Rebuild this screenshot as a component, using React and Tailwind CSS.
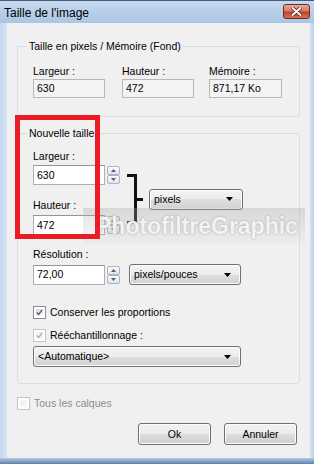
import React from "react";

// petits boutons haut/bas à côté des champs
const Spin = () => (
  <div className="flex flex-col w-[13px]">
    <div className="h-[9px] border border-[#aab3c1] rounded-[2px] bg-gradient-to-b from-[#fbfbfb] to-[#e1e3e7] flex items-center justify-center">
      <svg width="5" height="3" viewBox="0 0 5 3">
        <path d="M0 3L2.5 0L5 3Z" fill="#4d5f82" />
      </svg>
    </div>
    <div className="h-[9px] border border-[#aab3c1] rounded-[2px] bg-gradient-to-b from-[#fbfbfb] to-[#e1e3e7] flex items-center justify-center">
      <svg width="5" height="3" viewBox="0 0 5 3">
        <path d="M0 0L5 0L2.5 3Z" fill="#4d5f82" />
      </svg>
    </div>
  </div>
);

const Combo = ({ label, className }) => (
  <div
    className={`h-[21px] rounded-[3px] border border-[#707070] bg-[linear-gradient(#f3f3f3_0%,#ececec_50%,#dedede_50%,#d2d2d2_100%)] shadow-[inset_0_0_0_1px_#fbfbfb] flex items-center pl-[4px] pr-[9px] ${className}`}
  >
    <span className="flex-1 leading-[13px]">{label}</span>
    <svg width="7" height="4" viewBox="0 0 7 4">
      <path d="M0 0H7L3.5 4Z" fill="#000" />
    </svg>
  </div>
);

const Check = ({ disabled }) => (
  <div
    className={`w-[13px] h-[13px] border bg-white p-[2px] ${
      disabled ? "border-[#c4c4c4]" : "border-[#8e8f8f]"
    }`}
  >
    <div
      className={`w-full h-full flex items-center justify-center ${
        disabled ? "bg-[#f4f4f4]" : "bg-gradient-to-br from-[#d8d8d8] to-[#fafafa]"
      }`}
    >
      {disabled === undefined || disabled === "checked" ? (
        <svg width="9" height="9" viewBox="0 0 9 9">
          <path
            d="M1 4.5L3.4 7L8 1.2"
            fill="none"
            stroke={disabled ? "#b0b0b0" : "#4a5d8c"}
            strokeWidth="1.8"
          />
        </svg>
      ) : null}
    </div>
  </div>
);

const Field = ({ value }) => (
  <div className="w-[72px] h-[20px] bg-white border border-[#a9b0ba] border-t-[#8e96a2] flex items-center pl-[3px] leading-[13px]">
    {value}
  </div>
);

const Button = ({ children }) => (
  <button className="w-[73px] h-[22px] rounded-[3px] border border-[#707070] bg-[linear-gradient(#f2f2f2_0%,#ebebeb_50%,#dddddd_50%,#cfcfcf_100%)] shadow-[inset_0_0_0_1px_#fcfcfc] text-[10.5px] leading-[13px]">
    {children}
  </button>
);

export default function App() {
  return (
    <div className="w-[314px] h-[464px] flex flex-col font-['Liberation_Sans',Arial,sans-serif] text-[10.5px] text-black bg-[#bcd2ec]">
      {/* barre de titre */}
      <div className="h-[23px] flex items-start border-t border-[#4b5d74] bg-gradient-to-b from-[#c5d9ef] to-[#abc5e3] pl-[4px] pr-[4px]">
        <span className="flex-1 text-[12px] leading-[14px] mt-[5px] text-black">Taille de l'image</span>
        <div className="mt-[3px] w-[27px] h-[15px] rounded-[3px] border border-[#6d2a22] bg-[linear-gradient(#e9a99b_0%,#d77a68_45%,#c1412d_55%,#d4714f_100%)] flex items-center justify-center">
          <svg width="11" height="9" viewBox="0 0 11 9">
            <path d="M1.5 1L9.5 8M9.5 1L1.5 8" stroke="#5b1f17" strokeWidth="3.6" strokeLinecap="round" />
            <path d="M1.5 1L9.5 8M9.5 1L1.5 8" stroke="#ffffff" strokeWidth="2" strokeLinecap="round" />
          </svg>
        </div>
      </div>

      <div className="flex-1 flex">
        <div className="w-[7px] bg-gradient-to-r from-[#c3d7ee] to-[#d6e4f3]" />

        {/* contenu */}
        <div className="flex-1 relative bg-[#f0f0f0] flex flex-col pt-[17px]">
          <fieldset className="mx-[10px] h-[77px] border border-[#d5dfe5] rounded-[3px]">
            <legend className="ml-[9px] px-[2px] leading-[13px]">Taille en pixels / Mémoire (Fond)</legend>
            <div className="flex pl-[15px] pt-[12px]">
              <div className="flex flex-col w-[72px]">
                <span className="leading-[13px]">Largeur :</span>
                <div className="mt-[1px] h-[19px] bg-[#f3f3f3] border border-[#b7b7b7] flex items-center pl-[3px] leading-[13px]">630</div>
              </div>
              <div className="flex flex-col w-[72px] ml-[17px]">
                <span className="leading-[13px]">Hauteur :</span>
                <div className="mt-[1px] h-[19px] bg-[#f3f3f3] border border-[#b7b7b7] flex items-center pl-[3px] leading-[13px]">472</div>
              </div>
              <div className="flex flex-col w-[73px] ml-[15px]">
                <span className="leading-[13px]">Mémoire :</span>
                <div className="mt-[1px] h-[19px] bg-[#f3f3f3] border border-[#b7b7b7] flex items-center pl-[3px] leading-[13px]">871,17 Ko</div>
              </div>
            </div>
          </fieldset>

          <fieldset className="mt-[10px] mx-[10px] h-[257px] border border-[#d5dfe5] rounded-[3px]">
            <legend className="ml-[9px] px-[2px] leading-[13px]">Nouvelle taille</legend>
            <div className="flex flex-col pl-[15px] pt-[10px]">
              <div className="flex">
                <div className="flex flex-col">
                  <span className="leading-[13px]">Largeur :</span>
                  <div className="mt-[2px] flex items-center gap-[2px]">
                    <Field value="630" />
                    <Spin />
                  </div>
                  <span className="mt-[14px] leading-[13px]">Hauteur :</span>
                  <div className="mt-[3px] flex items-center gap-[2px]">
                    <Field value="472" />
                    <Spin />
                  </div>
                </div>
                <div className="ml-[7px] mt-[24px] flex items-center self-start">
                  <div className="w-[10px] h-[50px] border-t-[3px] border-r-[3px] border-b-[3px] border-[#111]" />
                  <div className="w-[6px] h-[3px] bg-[#111]" />
                  <Combo label="pixels" className="ml-[6px] w-[94px]" />
                </div>
              </div>

              <span className="mt-[13px] leading-[13px]">Résolution :</span>
              <div className="mt-[3px] flex items-center">
                <Field value="72,00" />
                <div className="ml-[2px]">
                  <Spin />
                </div>
                <Combo label="pixels/pouces" className="ml-[9px] w-[112px]" />
              </div>

              <div className="mt-[21px] flex items-center gap-[4px]">
                <Check />
                <span className="leading-[13px]">Conserver les proportions</span>
              </div>
              <div className="mt-[10px] flex items-center gap-[4px]">
                <Check disabled="checked" />
                <span className="leading-[13px]">Rééchantillonnage :</span>
              </div>
              <Combo label="<Automatique>" className="mt-[4px] w-[208px]" />
            </div>
          </fieldset>

          <div className="mt-[13px] ml-[10px] flex items-center gap-[4px] text-[#8d8d8d]">
            <Check disabled="empty" />
            <span className="leading-[13px]">Tous les calques</span>
          </div>

          <div className="mt-[13px] flex justify-end gap-[13px] pr-[13px]">
            <Button>Ok</Button>
            <Button>Annuler</Button>
          </div>

          {/* bandeau filigrane */}
          <div className="absolute left-[76px] top-[185px] w-[222px] h-[36px] bg-[linear-gradient(rgba(165,165,165,0.32),rgba(215,215,215,0.15))] flex items-center pl-[13px]">
            <span className="text-[23px] font-bold leading-[24px] text-[#f3f3f3] [text-shadow:0_0_2px_#9a9a9a]">PhotofiltreGraphic</span>
          </div>

          {/* cadre rouge */}
          <div className="absolute left-[8px] top-[92px] w-[85px] h-[124px] border-[5px] border-[#ec1c24]" />
        </div>

        <div className="w-[4px] bg-gradient-to-r from-[#d6e4f3] to-[#b9cfe8]" />
      </div>

      <div className="h-[6px] bg-gradient-to-b from-[#b4cbe6] to-[#5f80aa]" />
    </div>
  );
}
